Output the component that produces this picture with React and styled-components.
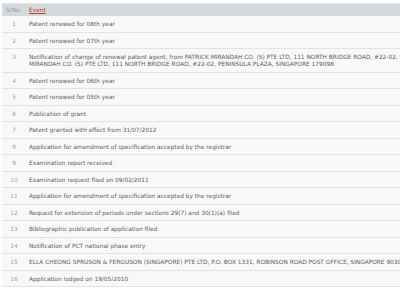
import React from 'react';
import styled, { createGlobalStyle } from 'styled-components';

const GlobalStyle = createGlobalStyle`
  body {
    margin: 0;
    background: #ffffff;
    overflow: hidden;
    font-family: "DejaVu Sans", Verdana, sans-serif;
  }
`;

const Page = styled.div`
  padding: 3px 0 0 2px;
  width: 700px;
`;

const Table = styled.table`
  width: 100%;
  border-collapse: collapse;
  border-top: 1px solid #e4e6e8;
  font-size: 5.85px;
  line-height: 7px;
`;

const HeadRow = styled.tr`
  background: #d4d9dc;
`;

const HeadCell = styled.th`
  text-align: left;
  font-weight: normal;
  height: 12px;
  padding: 0 0 0 4px;
  width: ${(p) => (p.$num ? '19px' : 'auto')};
  color: #9aa0a4;
`;

const SortLink = styled.a`
  color: #c8352b;
  text-decoration: underline;
`;

const Row = styled.tr`
  background: #f8f8f8;
  border-bottom: 1px solid #e3e3e3;
`;

const NumCell = styled.td`
  text-align: center;
  vertical-align: top;
  color: #a3a3a3;
  padding: 5px 0 3.5px 1px;
`;

const EventCell = styled.td`
  color: #616161;
  vertical-align: top;
  white-space: nowrap;
  padding: 5px 0 3.5px 4px;
`;

const Line = styled.span`
  display: block;
`;

const events = [
  ['Patent renewed for 08th year'],
  ['Patent renewed for 07th year'],
  [
    'Notification of change of renewal patent agent, from PATRICK MIRANDAH CO. (S) PTE LTD, 111 NORTH BRIDGE ROAD, #22-02, PENINSULA PLAZA, SINGAPORE 179098 to',
    'MIRANDAH CO. (S) PTE LTD, 111 NORTH BRIDGE ROAD, #22-02, PENINSULA PLAZA, SINGAPORE 179098',
  ],
  ['Patent renewed for 06th year'],
  ['Patent renewed for 05th year'],
  ['Publication of grant'],
  ['Patent granted with effect from 31/07/2012'],
  ['Application for amendment of specification accepted by the registrar'],
  ['Examination report received'],
  ['Examination request filed on 09/02/2011'],
  ['Application for amendment of specification accepted by the registrar'],
  ['Request for extension of periods under sections 29(7) and 30(1)(a) filed'],
  ['Bibliographic publication of application filed'],
  ['Notification of PCT national phase entry'],
  ['ELLA CHEONG SPRUSON & FERGUSON (SINGAPORE) PTE LTD, P.O. BOX 1331, ROBINSON ROAD POST OFFICE, SINGAPORE 903031'],
  ['Application lodged on 19/05/2010'],
];

export default function App() {
  return (
    <Page>
      <GlobalStyle />
      <Table>
        <thead>
          <HeadRow>
            <HeadCell $num>S/No.</HeadCell>
            <HeadCell>
              <SortLink href="#">Event</SortLink>
            </HeadCell>
          </HeadRow>
        </thead>
        <tbody>
          {events.map((lines, i) => (
            <Row key={i}>
              <NumCell>{i + 1}</NumCell>
              <EventCell>
                {lines.map((l, j) => (
                  <Line key={j}>{l}</Line>
                ))}
              </EventCell>
            </Row>
          ))}
        </tbody>
      </Table>
    </Page>
  );
}
